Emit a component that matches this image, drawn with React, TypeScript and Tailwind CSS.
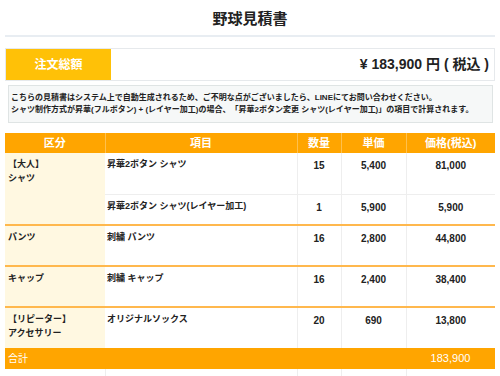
import React from "react";

type Line = { item: string; qty: string; unit: string; price: string };
type Group = { label: string[]; lines: Line[] };

const GROUPS: Group[] = [
  {
    label: ["【大人】", "シャツ"],
    lines: [
      { item: "昇華2ボタン シャツ", qty: "15", unit: "5,400", price: "81,000" },
      { item: "昇華2ボタン シャツ(レイヤー加工)", qty: "1", unit: "5,900", price: "5,900" },
    ],
  },
  { label: ["パンツ"], lines: [{ item: "刺繍 パンツ", qty: "16", unit: "2,800", price: "44,800" }] },
  { label: ["キャップ"], lines: [{ item: "刺繍 キャップ", qty: "16", unit: "2,400", price: "38,400" }] },
  {
    label: ["【リピーター】", "アクセサリー"],
    lines: [{ item: "オリジナルソックス", qty: "20", unit: "690", price: "13,800" }],
  },
];

const num = "align-top pt-[5px] text-center text-[10px] font-bold border-l border-[#eeeeee]";

export default function App() {
  return (
    <div className="w-[500px] h-[376px] overflow-hidden bg-white px-[5px] text-[#222] font-['Liberation_Sans','Noto_Sans_CJK_JP',sans-serif]">
      <h1 className="pt-[9px] pb-[6px] text-center text-[15px] leading-[20px] font-bold">野球見積書</h1>
      <div className="h-[2px] bg-[#e8edf2]" />

      {/* total */}
      <div className="mt-[11px] flex h-[33px] border border-[#e6e9ec]">
        <div className="flex w-[105px] items-center justify-center bg-[#ffc107] text-[12px] font-bold text-white">
          注文総額
        </div>
        <div className="flex flex-1 items-center justify-end pr-[5px] text-[14px] font-bold">
          ¥ 183,900 円 ( 税込 )
        </div>
      </div>

      {/* notice */}
      <div className="ml-[3px] mr-[2px] mt-[4px] border border-[#dfe4e4] bg-[#f6f8f8] px-[2px] py-[6px] text-[8px] leading-[12px] font-bold">
        <p>こちらの見積書はシステム上で自動生成されるため、ご不明な点がございましたら、LINEにてお問い合わせください。</p>
        <p>シャツ制作方式が昇華(フルボタン) + (レイヤー加工)の場合、「昇華2ボタン変更 シャツ(レイヤー加工)」の項目で計算されます。</p>
      </div>

      <table className="mt-[10px] w-[490px] table-fixed border-collapse">
        <colgroup>
          <col className="w-[100px]" />
          <col className="w-[192px]" />
          <col className="w-[44px]" />
          <col className="w-[65px]" />
          <col className="w-[89px]" />
        </colgroup>
        <thead>
          <tr className="h-[20px] bg-[#ffa500] text-[11px] font-bold text-white">
            <th className="font-bold">区分</th>
            <th className="border-l border-white/30 font-bold">項目</th>
            <th className="border-l border-white/30 font-bold">数量</th>
            <th className="border-l border-white/30 font-bold">単価</th>
            <th className="border-l border-white/30 font-bold">価格(税込)</th>
          </tr>
        </thead>
        <tbody>
          {GROUPS.map((g, gi) =>
            g.lines.map((l, li) => (
              <tr
                key={`${gi}-${li}`}
                className={`${li > 0 ? "h-[31px] border-t border-[#eeeeee]" : "h-[41px]"} ${li === 0 && gi > 0 ? "border-t-2 border-[#ffb84d]" : ""}`}
              >
                {li === 0 && (
                  <td
                    rowSpan={g.lines.length}
                    className="align-top bg-[#fff8e1] pl-[3px] pt-[4px] text-[9px] leading-[14px] font-bold"
                  >
                    {g.label.map((t) => (
                      <div key={t}>{t}</div>
                    ))}
                  </td>
                )}
                <td className="align-top pl-[2px] pt-[4px] text-[9px] leading-[14px] font-bold">{l.item}</td>
                <td className={num}>{l.qty}</td>
                <td className={num}>{l.unit}</td>
                <td className={num}>{l.price}</td>
              </tr>
            ))
          )}
          <tr className="h-[21px] bg-[#ffa500] text-white">
            <td className="pl-[3px] text-[10px]" colSpan={4}>
              合計
            </td>
            <td className="text-center text-[11px]">183,900</td>
          </tr>
          <tr className="h-[30px]">
            <td />
            <td className="border-l border-[#eeeeee]" />
            <td className="border-l border-[#eeeeee]" />
            <td className="border-l border-[#eeeeee]" />
            <td className="border-l border-[#eeeeee]" />
          </tr>
        </tbody>
      </table>
    </div>
  );
}
